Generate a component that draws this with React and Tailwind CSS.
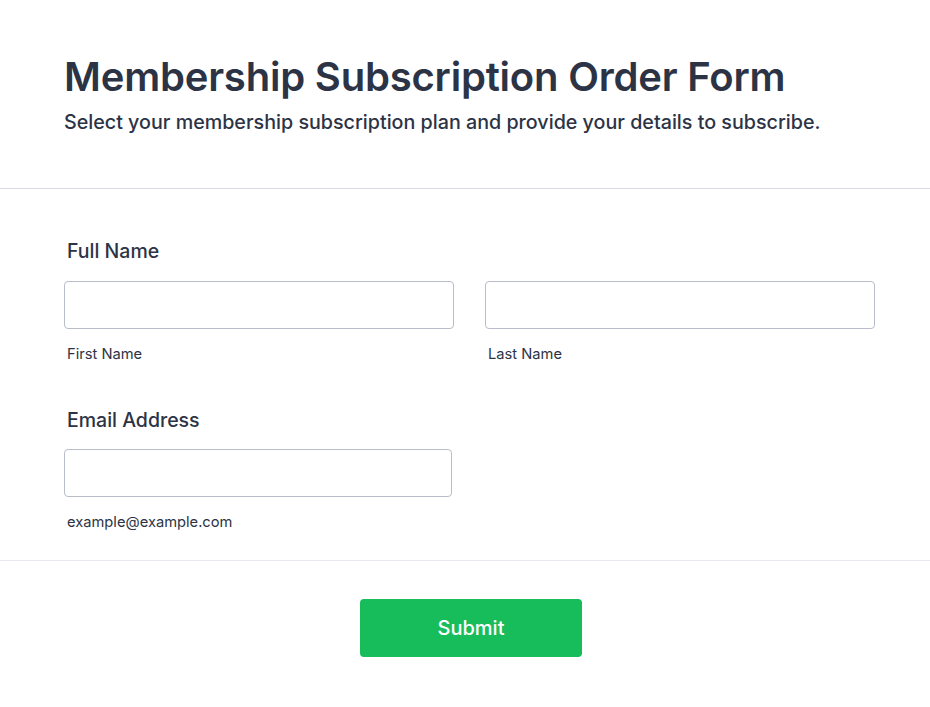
import React from 'react';

const Field = ({ sub, className = '' }) => (
  <div className={className}>
    <input type="text" className="block w-full h-12 rounded border border-[#b8bdc9] bg-white px-3 outline-none" />
    <div className="mt-[15px] pl-[3px] text-[14.7px] leading-5 text-[#2c3345]">{sub}</div>
  </div>
);

const App = () => {
  return (
    <div className="min-h-screen bg-white text-[#2c3345]" style={{ fontFamily: 'Inter, "Noto Sans", sans-serif' }}>
      {/* Header */}
      <div className="px-16 pt-[52px] pb-[54px] border-b border-[#d8dae5]">
        <h1 className="text-[40px] leading-[50px] font-semibold tracking-[-0.2px]">Membership Subscription Order Form</h1>
        <p className="mt-[8px] text-[19.7px] leading-6 font-medium">Select your membership subscription plan and provide your details to subscribe.</p>
      </div>

      {/* Fields */}
      <div className="px-16 pt-[50px] pb-[28px] border-b border-[#e6e9f2]">
        <label className="block pl-[3px] text-[19.5px] leading-6 font-medium mb-[18px]">Full Name</label>
        <div className="flex gap-[31px] w-[811px]">
          <Field sub="First Name" className="flex-1" />
          <Field sub="Last Name" className="flex-1" />
        </div>

        <label className="block pl-[3px] mt-[44px] text-[19.5px] leading-6 font-medium mb-[17px]">Email Address</label>
        <Field sub="example@example.com" className="w-[388px]" />
      </div>

      {/* Submit */}
      <div className="flex justify-center pl-3 pt-[38px] pb-12">
        <button className="w-[222px] h-[58px] rounded bg-[#18bd5b] text-white text-[20px] font-medium">Submit</button>
      </div>
    </div>
  );
};

export default App;
